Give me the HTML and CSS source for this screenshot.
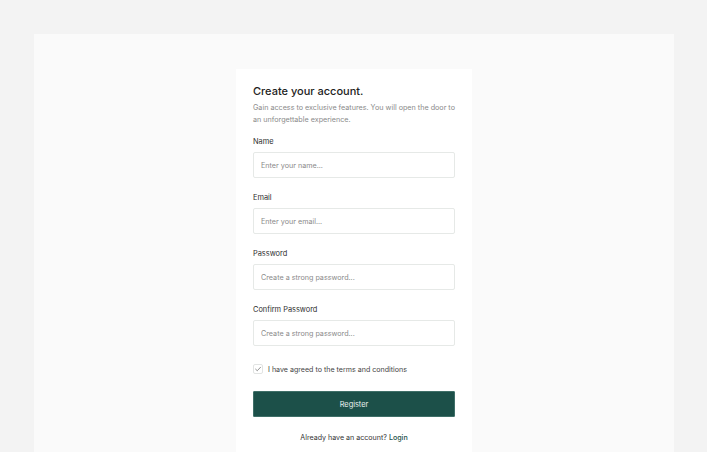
FILE: index.html
```html
<!DOCTYPE html>
<html lang="en">
<head>
<meta charset="utf-8">
<title>Create your account</title>
<link rel="stylesheet" href="styles.css">
</head>
<body>
<div class="page">
  <div class="panel">
    <form class="card" onsubmit="return false">
      <h1 class="title">Create your account.</h1>
      <p class="sub">Gain access to exclusive features. You will open the door to an unforgettable experience.</p>
      <div class="field first">
        <label class="label">Name</label>
        <input class="input" type="text" placeholder="Enter your name...">
      </div>
      <div class="field">
        <label class="label">Email</label>
        <input class="input" type="text" placeholder="Enter your email...">
      </div>
      <div class="field">
        <label class="label">Password</label>
        <input class="input" type="password" placeholder="Create a strong password...">
      </div>
      <div class="field">
        <label class="label">Confirm Password</label>
        <input class="input" type="password" placeholder="Create a strong password...">
      </div>
      <div class="agree">
        <span class="box"><svg viewBox="0 0 10 10" width="10" height="10"><path d="M2 5.2 L4.1 7.2 L8.2 2.8" fill="none" stroke="#555" stroke-width="0.8" stroke-linecap="round" stroke-linejoin="round"/></svg></span>
        <span class="agree-text">I have agreed to the terms and conditions</span>
      </div>
      <button class="btn" type="button">Register</button>
      <p class="foot">Already have an account? <a class="link" href="#">Login</a></p>
    </form>
  </div>
</div>
</body>
</html>
```

FILE: styles.css
```css
* { box-sizing: border-box; }
html, body { margin: 0; padding: 0; }
body {
  background: #f3f3f3;
  font-family: Inter, "Noto Sans", sans-serif;
  width: 707px;
  height: 452px;
  overflow: hidden;
}
.page {
  padding: 34px 33px 0 34px;
  height: 452px;
}
.panel {
  background: #fafafa;
  height: 100%;
  display: flex;
  justify-content: center;
  align-items: flex-start;
  padding-top: 35px;
}
.card {
  width: 236px;
  background: #ffffff;
  padding: 15px 17px 20px 17px;
  display: flex;
  flex-direction: column;
}
.card > * { flex-shrink: 0; }
.title {
  margin: 0;
  font-size: 11px;
  line-height: 15px;
  font-weight: 500;
  color: #222222;
}
.sub {
  margin: 3px 0 0 0;
  font-size: 7.2px;
  line-height: 12px;
  color: #8a8a8a;
}
.field {
  display: flex;
  flex-direction: column;
  margin-top: 15px;
}
.field.first { margin-top: 11px; }
.label {
  font-size: 7.4px;
  line-height: 10px;
  color: #2e2e2e;
  font-weight: 400;
}
.input {
  margin-top: 5px;
  height: 26px;
  border: 1px solid #e6e9e7;
  border-radius: 2px;
  padding: 0 7px;
  font-family: Inter, "Noto Sans", sans-serif;
  font-size: 7.2px;
  color: #333;
  background: #fff;
  outline: none;
}
.input::placeholder { color: #8a8a8a; }
.agree {
  margin-top: 18px;
  display: flex;
  align-items: center;
  gap: 5px;
  height: 10px;
}
.box {
  width: 10px;
  height: 10px;
  border: 1px solid #e2e4e3;
  border-radius: 2px;
  display: flex;
  align-items: center;
  justify-content: center;
}
.box svg { display: block; }
.agree-text {
  font-size: 7.1px;
  color: #444;
}
.btn {
  margin-top: 17px;
  height: 26px;
  border: 1px solid #3f6f68;
  border-radius: 1px;
  background: #1c5049;
  color: #e9f0ee;
  font-family: Inter, "Noto Sans", sans-serif;
  font-size: 7.4px;
  font-weight: 400;
  cursor: pointer;
}
.foot {
  margin: 16px 0 0 0;
  text-align: center;
  font-size: 7.1px;
  line-height: 10px;
  color: #333;
}
.link {
  color: #1c5049;
  font-weight: 500;
  text-decoration: none;
}
```
